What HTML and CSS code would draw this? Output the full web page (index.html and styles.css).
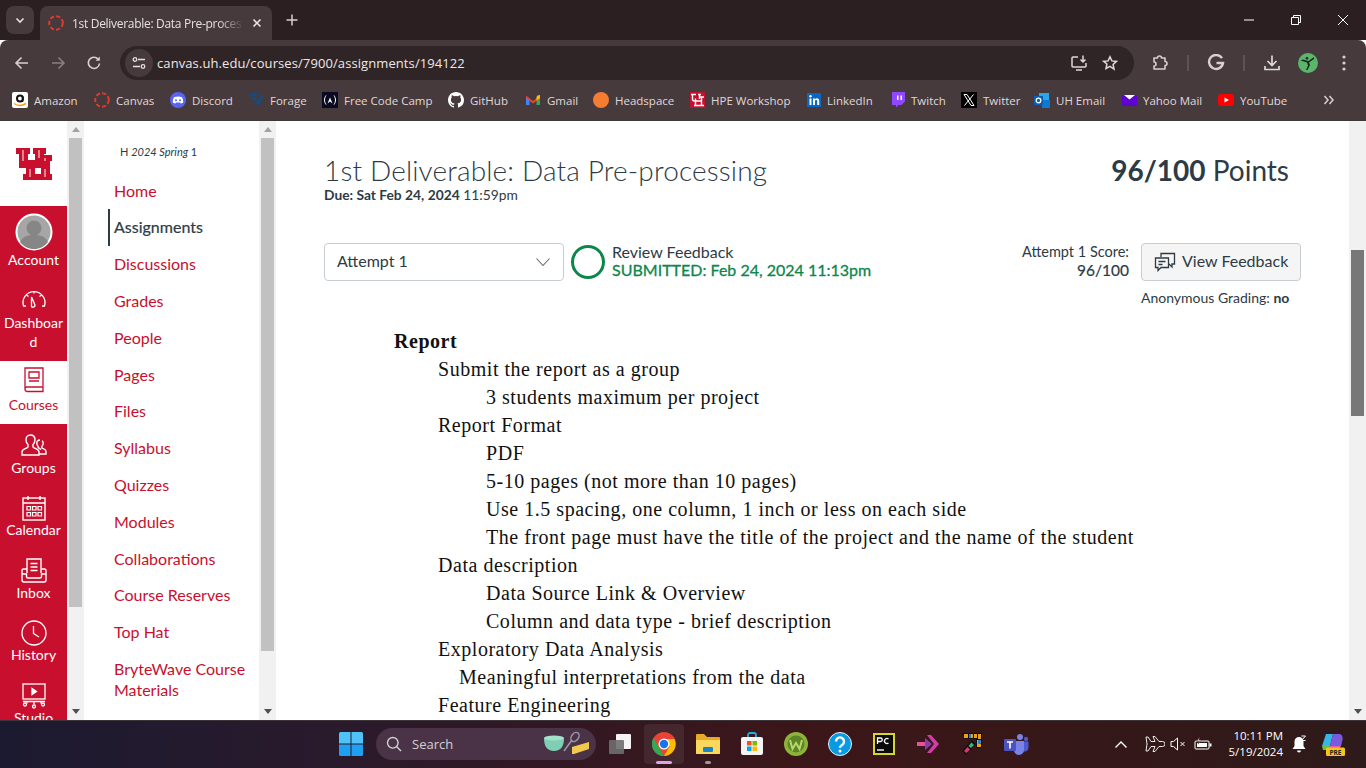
FILE: index.html
```html
<!DOCTYPE html>
<html lang="en">
<head>
    <meta charset="UTF-8">
    <meta name="viewport" content="width=device-width, initial-scale=1.0">
    <title>1st Deliverable: Data Pre-processing</title>
    <link rel="stylesheet" href="styles.css">
</head>
<body>
<div class="screen">

    <div class="tabstrip">
        <div class="tab-search"><svg width="12" height="12" viewBox="0 0 12 12"><path d="M2.500 4.500 6 8l3.500-3.500" fill="none" stroke="#e8e0e0" stroke-width="1.600"/></svg></div>
        <div class="tab">
            <svg width="16" height="16" viewBox="0 0 16 16"><circle cx="8" cy="8" r="6.800" fill="none" stroke="#e03a2c" stroke-width="2" stroke-dasharray="4.200 2.200"/></svg>
            <span class="tab-title">1st Deliverable: Data Pre-proces</span>
            <svg class="tab-close" width="10" height="10" viewBox="0 0 10 10"><path d="M1.500 1.500l7 7M8.500 1.500l-7 7" stroke="#e8e0e0" stroke-width="1.600"/></svg>
        </div>
        <svg class="new-tab" width="12" height="12" viewBox="0 0 12 12"><path d="M6 .5v11M.5 6h11" stroke="#d8cfcf" stroke-width="1.500"/></svg>
        <div class="win-controls">
            <svg width="12" height="12" viewBox="0 0 12 12"><path d="M1 6h10" stroke="#fff"/></svg>
            <svg width="12" height="12" viewBox="0 0 12 12"><path d="M1.500 3.500h7v7h-7zM3.500 3.500v-2h7v7h-2" fill="none" stroke="#fff"/></svg>
            <svg width="12" height="12" viewBox="0 0 12 12"><path d="M1 1l10 10M11 1 1 11" stroke="#fff"/></svg>
        </div>
    </div>

    <div class="toolbar">
        <div class="tool"><svg width="16" height="16" viewBox="0 0 16 16"><path d="M14 8H2.500M7.500 2.500 2 8l5.500 5.500" fill="none" stroke="#d8cfcf" stroke-width="1.600"/></svg></div>
        <div class="tool"><svg width="16" height="16" viewBox="0 0 16 16"><path d="M2 8h11.500M8.500 2.500 14 8l-5.500 5.500" fill="none" stroke="#8a7f80" stroke-width="1.600"/></svg></div>
        <div class="tool"><svg width="16" height="16" viewBox="0 0 16 16"><path d="M13.500 8.500A5.600 5.600 0 1 1 12 4" fill="none" stroke="#d8cfcf" stroke-width="1.600"/><path d="M13.800 1.500v4.300H9.500z" fill="#d8cfcf"/></svg></div>
        <div class="omnibox">
            <div class="site-chip"><svg width="14" height="14" viewBox="0 0 14 14" fill="none" stroke="#e8e0e0" stroke-width="1.300"><path d="M6 3.500h7M1 10.500h7"/><circle cx="3" cy="3.500" r="1.800"/><circle cx="11" cy="10.500" r="1.800"/></svg></div>
            <span class="url">canvas.uh.edu/courses/7900/assignments/194122</span>
            <svg class="omni-icon" width="18" height="18" viewBox="0 0 18 18" fill="none" stroke="#e0d8d8" stroke-width="1.500"><path d="M8 3H3a1 1 0 0 0-1 1v8a1 1 0 0 0 1 1h12a1 1 0 0 0 1-1V9M6 16h6M13 1.500V8M10.500 5.500 13 8l2.500-2.500"/></svg>
            <svg class="omni-icon" width="16" height="16" viewBox="0 0 16 16"><path d="M8 1.800l1.900 4.100 4.500.5-3.300 3.100.9 4.500L8 11.300l-4 2.200.9-4.500L1.600 6.400l4.500-.5z" fill="none" stroke="#e0d8d8" stroke-width="1.500"/></svg>
        </div>
        <div class="tool"><svg width="18" height="18" viewBox="0 0 18 18"><path d="M3 4h3.500a2 2 0 0 1 4 0H14v3.500a2 2 0 0 1 0 4V15H3v-3a2 2 0 0 0 0-4z" fill="none" stroke="#d8cfcf" stroke-width="1.600" stroke-linejoin="round"/></svg></div>
        <div class="tool-sep"></div>
        <div class="tool"><svg width="18" height="18" viewBox="0 0 18 18"><path d="M15 4.200A7 7 0 1 0 16 9H9.500" fill="none" stroke="#d8cfcf" stroke-width="2.400"/></svg></div>
        <div class="tool-sep"></div>
        <div class="tool"><svg width="18" height="18" viewBox="0 0 18 18"><path d="M9 1.500V11M4.500 7 9 11.500 13.500 7M2 12v3.500h14V12" fill="none" stroke="#e0d8d8" stroke-width="1.700"/></svg></div>
        <div class="tool"><svg width="20" height="20" viewBox="0 0 20 20"><circle cx="10" cy="10" r="10" fill="#5bb56b"/><path d="M16 4 10.500 8 5 6.500l-2.500 1L9 9.500l1 3L8 17h1.500l2.500-5-1-2.500 5-3.500z" fill="#1e2b22"/><circle cx="9" cy="5.300" r="1.300" fill="#1e2b22"/></svg></div>
        <div class="tool"><svg width="4" height="16" viewBox="0 0 4 16" fill="#d8cfcf"><circle cx="2" cy="2" r="1.600"/><circle cx="2" cy="8" r="1.600"/><circle cx="2" cy="14" r="1.600"/></svg></div>
    </div>

    <div class="bookmarks">
        <div class="mark mark-amazon"><svg width="16" height="16" viewBox="0 0 16 16"><rect width="16" height="16" rx="2" fill="#fff"/><circle cx="8" cy="6.500" r="3" fill="none" stroke="#111" stroke-width="2"/><path d="M10.500 4v6" stroke="#111" stroke-width="1.500"/><path d="M2 11.500c3.500 2.500 8 2.500 12 0" fill="none" stroke="#f90" stroke-width="1.500"/></svg>Amazon</div>
        <div class="mark mark-canvas"><svg width="16" height="16" viewBox="0 0 16 16"><circle cx="8" cy="8" r="6.800" fill="none" stroke="#e03a2c" stroke-width="2" stroke-dasharray="4.200 2.200"/></svg>Canvas</div>
        <div class="mark mark-discord"><svg width="16" height="16" viewBox="0 0 16 16"><circle cx="8" cy="8" r="8" fill="#5865f2"/><path d="M4 5.200c2.500-1 5.500-1 8 0 1 1.700 1.300 3.500 1.200 5.300-1 .7-1.800 1-2.500 1.100l-.6-1H6l-.6 1c-.8-.1-1.600-.4-2.600-1.100C2.700 8.700 3 6.900 4 5.200z" fill="#fff"/><circle cx="6" cy="8.200" r="1" fill="#5865f2"/><circle cx="10" cy="8.200" r="1" fill="#5865f2"/></svg>Discord</div>
        <div class="mark mark-forage"><svg width="16" height="16" viewBox="0 0 16 16" fill="#124e86"><path d="M0 3l8-3 1 3-5 2zM10 1l6 4-3 2zM4 6l4-1 1 3-3 1zM10 7l5 0-5 7-2-3z"/></svg>Forage</div>
        <div class="mark mark-fcc"><svg width="16" height="16" viewBox="0 0 16 16"><rect width="16" height="16" fill="#0a0a23"/><path d="M4 3.500C2 6.500 2 9.500 4 12.500M12 3.500c2 3 2 6 0 9" fill="none" stroke="#fff"/><path d="M5.500 11.500 8 5.500l2.500 6-2.500-2z" fill="#fff"/></svg>Free Code Camp</div>
        <div class="mark mark-github"><svg width="16" height="16" viewBox="0 0 16 16"><path fill="#fff" d="M8 0C3.580 0 0 3.580 0 8c0 3.540 2.290 6.530 5.470 7.590.4.070.55-.170.550-.380v-1.340c-2.230.480-2.700-1.070-2.700-1.070-.360-.920-.890-1.170-.890-1.170-.730-.500.060-.490.060-.490.800.060 1.230.830 1.230.830.710 1.220 1.870.870 2.330.660.070-.520.280-.870.510-1.070-1.780-.200-3.640-.890-3.640-3.950 0-.870.310-1.590.820-2.150-.080-.200-.360-1.020.080-2.120 0 0 .670-.210 2.200.820a7.600 7.600 0 0 1 4 0c1.530-1.040 2.200-.820 2.200-.820.440 1.100.160 1.920.080 2.120.510.560.820 1.270.820 2.150 0 3.070-1.870 3.750-3.650 3.950.290.250.540.730.540 1.480v2.190c0 .210.150.460.550.380A8 8 0 0 0 16 8c0-4.420-3.580-8-8-8z"/></svg>GitHub</div>
        <div class="mark mark-gmail"><svg width="16" height="16" viewBox="0 0 16 16"><path d="M1 13V4l3.500 2.700V13z" fill="#4285f4"/><path d="M11.500 13V6.700L15 4v9z" fill="#34a853"/><path d="M1 3.500 8 9l7-5.500V6L8 11.500 1 6z" fill="#ea4335"/><path d="M12.500 3.500 15 3v3l-3.500 2.700V5z" fill="#fbbc04"/></svg>Gmail</div>
        <div class="mark mark-headspace"><svg width="16" height="16" viewBox="0 0 16 16"><circle cx="8" cy="8" r="8" fill="#f47d31"/></svg>Headspace</div>
        <div class="mark mark-hpe"><svg width="15" height="16" viewBox="0 0 15 16"><rect width="15" height="16" fill="#c8102e"/><path d="M1 2.500h5M2.500 2.500v4.500a2 2 0 0 0 2 2h5M8 2.500h3M9.500 2.500V7M4 13.500h4M5.500 6.500v7M7 13.500h7M11.500 5v8.500M10 5h4M5.500 9h6" fill="none" stroke="#fff" stroke-width="1.400"/></svg>HPE Workshop</div>
        <div class="mark mark-linkedin"><svg width="14" height="14" viewBox="0 0 14 14"><rect width="14" height="14" fill="#0a66c2"/><path d="M2.500 5.500h2V12h-2zM6 5.500h1.900v1c.5-.8 1.200-1.200 2.100-1.200 1.500 0 2.200 1 2.200 2.700v4h-2V8.500c0-.9-.3-1.400-1-1.400s-1.200.5-1.200 1.400V12H6z" fill="#fff"/><circle cx="3.500" cy="3.300" r="1.200" fill="#fff"/></svg>LinkedIn</div>
        <div class="mark mark-twitch"><svg width="15" height="16" viewBox="0 0 15 16"><path d="M2 0h13v9.500L11.500 13H8.500L6 15.500V13H2z" fill="#9146ff"/><path d="M7 3.500h1.500v4.500H7zM10.500 3.500H12v4.500h-1.500z" fill="#fff"/></svg>Twitch</div>
        <div class="mark mark-twitter"><svg width="16" height="16" viewBox="0 0 16 16"><rect width="16" height="16" fill="#000"/><path d="M3 2.500h3l7 11h-3zM12.500 2.500 3.500 13.500" fill="none" stroke="#fff"/></svg>Twitter</div>
        <div class="mark mark-outlook"><svg width="16" height="16" viewBox="0 0 16 16"><path d="M5 1h10v12H5z" fill="#28a8ea"/><path d="M8 8h8v7a1 1 0 0 1-1 1H8z" fill="#0f78d4"/><rect y="4" width="9" height="9" fill="#0a5fb0"/><circle cx="4.500" cy="8.500" r="2.300" fill="none" stroke="#fff" stroke-width="1.300"/></svg>UH Email</div>
        <div class="mark mark-yahoo"><svg width="15" height="12" viewBox="0 0 15 12"><rect width="15" height="11" y="1" fill="#5f01d1"/><path d="M2 1h11L7.500 5.500z" fill="#fff"/></svg>Yahoo Mail</div>
        <div class="mark mark-youtube"><svg width="16" height="12" viewBox="0 0 16 12"><rect width="16" height="12" rx="3" fill="#f00"/><path d="M6.500 3.500 11 6 6.500 8.500z" fill="#fff"/></svg>YouTube</div>
        <svg class="mark-more" width="12" height="10" viewBox="0 0 12 10"><path d="M1.500 1 5 5 1.500 9M6.500 1 10 5 6.500 9" fill="none" stroke="#d8cfcf" stroke-width="1.500"/></svg>
    </div>

    <div class="page">
        <nav class="rail">
            <div class="rail-logo">
                <svg width="38" height="34" viewBox="0 0 38 34">
                    <g fill="#c8102e">
                        <rect x="1" y="1" width="14" height="6"/>
                        <rect x="18" y="1" width="13" height="6"/>
                        <rect x="4" y="1" width="9" height="20"/>
                        <rect x="20" y="1" width="9" height="20"/>
                        <rect x="23" y="8" width="14" height="6"/>
                        <rect x="26" y="8" width="9" height="25"/>
                        <rect x="11" y="13" width="9" height="20"/>
                        <rect x="4" y="14" width="31" height="7"/>
                        <rect x="8" y="27" width="15" height="6"/>
                        <rect x="23" y="27" width="14" height="6"/>
                    </g>
                    <path d="M8 3v11M24 3v8M15 22v8M30 11v3M30 22v8" fill="none" stroke="#f6ccd3" stroke-width="1.200"/>
                </svg>
            </div>
            <div class="rail-group">
                <div class="rail-item rail-account">
                    <svg width="38" height="38" viewBox="0 0 38 38"><circle cx="19" cy="19" r="17.500" fill="#a6a6a6" stroke="#fff" stroke-width="2"/><circle cx="19" cy="15" r="7.500" fill="#868686"/><path d="M5 29c3-6 8-7 14-7s11 1 14 7c-3.500 4.500-8.500 7-14 7s-10.500-2.500-14-7z" fill="#868686"/></svg>
                    <span>Account</span>
                </div>
                <div class="rail-item rail-dash">
                    <svg width="26" height="26" viewBox="0 0 26 26" fill="none" stroke="#fff" stroke-width="1.300"><path d="M5 20H2.500A11 11 0 1 1 23.500 20H21"/><path d="M10.500 11l3.500 8a2 2 0 0 1-3.500 1.500z"/><path d="M13 5v2.500M5.500 9l2 1.500M20.500 9l-2 1.500"/></svg>
                    <span>Dashboard</span>
                </div>
            </div>
            <div class="rail-item rail-active">
                <svg width="26" height="26" viewBox="0 0 26 26" fill="none" stroke="#c8102e" stroke-width="1.300"><path d="M4 1h18v19H6a2 2 0 0 0-2 2zM4 22a2.500 2.500 0 0 0 2.500 2.500H22V20"/><path d="M8 5h10v6H8zM8 14h10"/></svg>
                <span>Courses</span>
            </div>
            <div class="rail-item">
                <svg width="26" height="26" viewBox="0 0 26 26" fill="none" stroke="#fff" stroke-width="1.400"><path d="M9.500 2c-3 0-4.500 2.200-4.500 4.800 0 2.200 1 3.800 2 4.700v2.500C5 16 1 16 1 19v3h17v-3c0-3-4-3-6-5v-2.500c1-.9 2-2.500 2-4.700C14 4.200 12.500 2 9.500 2z"/><path d="M19 7c-2 0-3.200 1.500-3.200 3.300 0 1.500.7 2.600 1.400 3.200v1c1 1 2 1.300 3 2M21 7.700c.8.600 1.200 1.600 1.200 2.600 0 1.500-.7 2.600-1.400 3.200v1.500c1.500 1 4.200 1 4.200 3.500V21h-7"/></svg>
                <span>Groups</span>
            </div>
            <div class="rail-item">
                <svg width="26" height="26" viewBox="0 0 26 26" fill="none" stroke="#fff" stroke-width="1.400"><rect x="2" y="3" width="22" height="22"/><path d="M2 8h22M7 1v4M19 1v4"/><path d="M6 11.500h3.500V15H6zM11.500 11.500H15V15h-3.500zM17 11.500h3.500V15H17zM6 17.500h3.500V21H6zM11.500 17.500H15V21h-3.500zM17 17.500h3.500V21H17z" stroke-width="1.200"/></svg>
                <span>Calendar</span>
            </div>
            <div class="rail-item">
                <svg width="26" height="26" viewBox="0 0 26 26" fill="none" stroke="#fff" stroke-width="1.400"><path d="M6 15V1h14v14"/><path d="M9.500 5.500h7M9.500 9h7M9.500 12.500h7"/><path d="M6 11H2.500A1.500 1.500 0 0 0 1 12.500V22a2 2 0 0 0 2 2h20a2 2 0 0 0 2-2V12.500A1.500 1.500 0 0 0 23.500 11H20M1 16h4.500v2.500a1.500 1.500 0 0 0 1.500 1.500h12a1.500 1.500 0 0 0 1.500-1.500V16H25"/></svg>
                <span>Inbox</span>
            </div>
            <div class="rail-item">
                <svg width="26" height="26" viewBox="0 0 26 26" fill="none" stroke="#fff" stroke-width="1.300"><circle cx="13" cy="13" r="12"/><path d="M12.500 6v7.500L18 17"/></svg>
                <span>History</span>
            </div>
            <div class="rail-item">
                <svg width="26" height="26" viewBox="0 0 26 26" fill="none" stroke="#fff" stroke-width="1.300"><rect x="2" y="1" width="22" height="15"/><path d="M11 5.500v6l4.500-3z" fill="#fff"/><path d="M2 18.500h22M6 18.500v2M13 18.500v3M20 18.500v2"/><circle cx="4" cy="21.500" r="1.500"/><circle cx="13" cy="23.500" r="1.500"/><circle cx="22" cy="21.500" r="1.500"/></svg>
                <span>Studio</span>
            </div>
        </nav>
        <div class="scrollbar">
            <div class="sb-up"></div>
            <div class="sb-thumb sb-thumb-rail"></div>
            <div class="sb-down"></div>
        </div>

        <aside class="course-nav">
            <div class="course-name">H <em>2024 Spring</em> 1</div>
            <ul class="course-links">
                <li><a>Home</a></li>
                <li class="current"><a>Assignments</a></li>
                <li><a>Discussions</a></li>
                <li><a>Grades</a></li>
                <li><a>People</a></li>
                <li><a>Pages</a></li>
                <li><a>Files</a></li>
                <li><a>Syllabus</a></li>
                <li><a>Quizzes</a></li>
                <li><a>Modules</a></li>
                <li><a>Collaborations</a></li>
                <li><a>Course Reserves</a></li>
                <li><a>Top Hat</a></li>
                <li><a>BryteWave Course Materials</a></li>
            </ul>
        </aside>
        <div class="scrollbar">
            <div class="sb-up"></div>
            <div class="sb-thumb sb-thumb-nav"></div>
            <div class="sb-down"></div>
        </div>

        <main class="content">
            <div class="title-row">
                <div>
                    <h1>1st Deliverable: Data Pre-processing</h1>
                    <div class="due"><b>Due: Sat Feb 24, 2024</b> 11:59pm</div>
                </div>
                <div class="points"><b>96/100</b> Points</div>
            </div>

            <div class="attempt-row">
                <div class="attempt-select"><span>Attempt <b>1</b></span>
                    <svg width="16" height="10" viewBox="0 0 16 10"><path d="M1.500 1.500 8 8.500l6.500-7" fill="none" stroke="#5c6a74" stroke-width="1.100"/></svg>
                </div>
                <div class="status-ring"></div>
                <div class="status-text">
                    <div>Review Feedback</div>
                    <div class="submitted">SUBMITTED: Feb 24, 2024 11:13pm</div>
                </div>
                <div class="score">
                    <div>Attempt 1 Score:</div>
                    <div class="score-num">96/100</div>
                </div>
                <div class="feedback-btn">
                    <svg width="22" height="20" viewBox="0 0 22 20" fill="none" stroke="#2d3b45" stroke-width="1.300"><path d="M7 5V1.500h13.500V12H18v3l-3-3"/><path d="M1.500 6h13v9.500H7L4 18.500v-3H1.500zM4.500 9.500h7M4.500 12.500h4"/></svg>
                    <span>View Feedback</span>
                </div>
            </div>
            <div class="anon-row"><div class="anon">Anonymous Grading: <b>no</b></div></div>

            <div class="report">
                <div class="report-title">Report</div>
                <div class="lvl1">Submit the report as a group</div>
                <div class="lvl2">3 students maximum per project</div>
                <div class="lvl1">Report Format</div>
                <div class="lvl2">PDF</div>
                <div class="lvl2">5-10 pages (not more than 10 pages)</div>
                <div class="lvl2">Use 1.5 spacing, one column, 1 inch or less on each side</div>
                <div class="lvl2">The front page must have the title of the project and the name of the student</div>
                <div class="lvl1">Data description</div>
                <div class="lvl2">Data Source Link &amp; Overview</div>
                <div class="lvl2">Column and data type - brief description</div>
                <div class="lvl1">Exploratory Data Analysis</div>
                <div class="lvl1b">Meaningful interpretations from the data</div>
                <div class="lvl1">Feature Engineering</div>
            </div>
        </main>
        <div class="scrollbar">
            <div class="sb-up sb-spacer"></div>
            <div class="sb-thumb sb-thumb-main"></div>
            <div class="sb-down"></div>
        </div>
    </div>

    <footer class="taskbar">
        <svg class="tb-start" width="24" height="24" viewBox="0 0 24 24"><path d="M0 1.500A1.500 1.500 0 0 1 1.500 0h10v11.500H0z" fill="#4fc3f7"/><path d="M12.500 0h10A1.500 1.500 0 0 1 24 1.500v10H12.500z" fill="#4fc3f7"/><path d="M0 12.500h11.500V24h-10A1.500 1.500 0 0 1 0 22.500z" fill="#1e9fef"/><path d="M12.500 12.500H24v10a1.500 1.500 0 0 1-1.500 1.500h-10z" fill="#1e9fef"/></svg>
        <div class="tb-search">
            <svg width="16" height="16" viewBox="0 0 16 16" fill="none" stroke="#d5d0d5" stroke-width="1.400"><circle cx="6.800" cy="6.800" r="5.300"/><path d="m10.800 10.800 4.200 4.200"/></svg>
            <span>Search</span>
            <svg class="tb-search-art" width="50" height="26" viewBox="0 0 50 26"><path d="M1 7h20c0 8-3 13-10 13S1 15 1 7z" fill="#7fcfb4"/><ellipse cx="11" cy="7" rx="10" ry="2.500" fill="#a4e2cc"/><path d="M21 20 29 9" stroke="#9a97a8" stroke-width="1.500"/><ellipse cx="32" cy="6" rx="3.500" ry="5" fill="none" stroke="#9a97a8" stroke-width="1.500" transform="rotate(35 32 6)"/><path d="M29 16l17-5v7l-15 5h-2z" fill="#f2c94c"/></svg>
        </div>
        <div class="tb-app"><svg width="24" height="22" viewBox="0 0 24 22"><rect x="8" y="1" width="15" height="15" rx="1" fill="#f4f4f4"/><rect x="1" y="7" width="15" height="14" rx="1" fill="#6e6e6e" fill-opacity=".9"/></svg></div>
        <div class="tb-app tb-active"><svg width="24" height="24" viewBox="0 0 24 24"><circle cx="12" cy="12" r="12" fill="#ea4335"/><path d="M12 24A12 12 0 0 1 1.600 6L7 15.500 12 24z" fill="#34a853"/><path d="M12 24l5.500-9.500L12 7h10.400A12 12 0 0 1 12 24z" fill="#fbbc04"/><circle cx="12" cy="12" r="5.500" fill="#fff"/><circle cx="12" cy="12" r="4.200" fill="#1a73e8"/></svg></div>
        <div class="tb-app tb-open"><svg width="24" height="22" viewBox="0 0 24 22"><path d="M0 2a1 1 0 0 1 1-1h7l3 3h12a1 1 0 0 1 1 1v15a1 1 0 0 1-1 1H1a1 1 0 0 1-1-1z" fill="#e8a92a"/><path d="M0 7h24v13a1 1 0 0 1-1 1H1a1 1 0 0 1-1-1z" fill="#fbd75b"/><rect x="7" y="14" width="10" height="5" rx="1" fill="#1b84c8"/></svg></div>
        <div class="tb-app"><svg width="24" height="24" viewBox="0 0 24 24"><path d="M8 6V3a2 2 0 0 1 2-2h4a2 2 0 0 1 2 2v3" fill="none" stroke="#29a8e8" stroke-width="1.800"/><rect x="1" y="5" width="22" height="18" rx="2" fill="#f4f4f4"/><rect x="7" y="9" width="4.500" height="4.500" fill="#f25022"/><rect x="12.500" y="9" width="4.500" height="4.500" fill="#7fba00"/><rect x="7" y="14.500" width="4.500" height="4.500" fill="#00a4ef"/><rect x="12.500" y="14.500" width="4.500" height="4.500" fill="#ffb900"/></svg></div>
        <div class="tb-app"><svg width="24" height="24" viewBox="0 0 24 24"><circle cx="12" cy="12" r="12" fill="#8cb33a"/><circle cx="12" cy="12" r="8.500" fill="#5d8426"/><path d="M6 8l2.500 9L12 11l3.500 6L18 8" fill="none" stroke="#b7d96a" stroke-width="2"/></svg></div>
        <div class="tb-app"><svg width="24" height="24" viewBox="0 0 24 24"><circle cx="12" cy="12" r="11.500" fill="#0a9ae2" stroke="#eef" stroke-width="1"/><path d="M8 9.500a4 4 0 1 1 6.300 3.200c-1.500 1-2.300 1.700-2.300 3" fill="none" stroke="#fff" stroke-width="2.400"/><circle cx="12" cy="19" r="1.500" fill="#fff"/></svg></div>
        <div class="tb-app"><svg width="22" height="22" viewBox="0 0 22 22"><rect x="1" y="1" width="20" height="20" fill="#0b0b0b" stroke="#d6d62c" stroke-width="2"/><path d="M4 17h7" stroke="#fff" stroke-width="1.400"/><path d="M4.500 11V5h3a1.700 1.700 0 0 1 0 3.500h-3M15.500 6a2.500 2.500 0 1 0 0 4" fill="none" stroke="#fff" stroke-width="1.300"/></svg></div>
        <div class="tb-app"><svg width="24" height="20" viewBox="0 0 24 20"><path d="M1 8h12v4H1z" fill="#e0559a"/><path d="M11 1h4l8 9-8 9h-4l7-9z" fill="#cf3fa5"/><path d="M9 4l7 6-7 6z" fill="#8b3aa8"/></svg></div>
        <div class="tb-app"><svg width="22" height="24" viewBox="0 0 22 24"><path d="M1 1h20v15h-6V7H4z" fill="#111"/><path d="M3 2h4v4H3zM8 2h4v4H8zM13 2h3v4h-3zM17 2h3v5h-3zM16 8h4v7h-4z" fill="#e8a020"/><path d="M8 2h2v4H8zM17 8h3v4h-3z" fill="#2f80c9"/><path d="M1 19 11 8l4 4L5 23z" fill="#111"/><path d="M3 19l3.500-4 2.500 2.500L5.500 21z" fill="#d63b6f"/><path d="M7.500 14l3-3.500 2.500 2.500-3 3z" fill="#3eb372"/></svg></div>
        <div class="tb-app"><svg width="26" height="22" viewBox="0 0 26 22"><circle cx="17" cy="4" r="3" fill="#7b83eb"/><circle cx="23" cy="6" r="2.200" fill="#5059c9"/><path d="M19 8.500h6.500v6a4 4 0 0 1-6 3.500z" fill="#5059c9"/><path d="M9 8h12v9a5 5 0 0 1-10 0z" fill="#7b83eb"/><rect x="1" y="6" width="12" height="12" rx="1" fill="#4b53bc"/><path d="M4 9h6M7 9v6.500" stroke="#fff" stroke-width="1.600"/></svg></div>

        <div class="tray">
            <svg class="tray-caret" width="14" height="9" viewBox="0 0 14 9"><path d="M1.500 7.500 7 2l5.500 5.500" fill="none" stroke="#fff" stroke-width="1.400"/></svg>
            <svg class="tray-plane" width="20" height="16" viewBox="0 0 20 16"><path d="M1 1h2l3 4.500h4L8 .5h2l4 5h3.500a2.500 2.500 0 0 1 0 5H14l-4 5H8l2-5H6L3 15H1l1-7z" fill="none" stroke="#fff" stroke-width=".9"/></svg>
            <svg class="tray-sound" width="16" height="14" viewBox="0 0 16 14"><path d="M1 4.500h2.500L7.500 1v12L3.500 9.500H1zM10.500 5l4 4M14.500 5l-4 4" fill="none" stroke="#fff"/></svg>
            <svg class="tray-batt" width="18" height="14" viewBox="0 0 18 14"><rect x="1" y="4" width="14" height="8" rx="1" fill="none" stroke="#fff"/><rect x="3" y="6" width="10" height="4" fill="#fff"/><path d="M15.500 6.500h2v3h-2z" fill="#fff"/><path d="M5.500 0 3 4h2.500L4 7l3.500-4H5z" fill="#fff" stroke="#3a1a18" stroke-width=".5"/></svg>
            <div class="tray-clock"><div>10:11 PM</div><div>5/19/2024</div></div>
            <svg class="tray-bell" width="16" height="18" viewBox="0 0 16 18"><path d="M8 2a4.500 4.500 0 0 0-4.500 4.500V11L1.500 14h13L12.500 11V6.500A4.500 4.500 0 0 0 8 2z" fill="#fff"/><path d="M6 15.500h4a2 2 0 0 1-4 0z" fill="#fff"/><path d="M10.500 1h4l-4 4.500h4" fill="none" stroke="#fff" stroke-width="1"/></svg>
            <svg class="tray-copilot" width="24" height="24" viewBox="0 0 24 24"><path d="M5 2h7L9 14H1z" fill="#35b6e8"/><path d="M12 2h6c3 0 4 3 3.500 6L20 14H9z" fill="#7a5be0"/><path d="M9 14h11l-3 4H5z" fill="#e65fa4"/><path d="M1 14h8l-2 4H2z" fill="#6cc04a"/><rect x="5" y="15.500" width="19" height="8.500" rx="1.500" fill="#f5c518"/><text x="14.500" y="22.500" class="pre-tag">PRE</text></svg>
        </div>
    </footer>
</div>
</body>
</html>
```

FILE: styles.css
```css
* { box-sizing: border-box; }
html, body { margin: 0; height: 100%; overflow: hidden; }
body { font-family: Lato, Arial, sans-serif; color: #2d3b45; background: #fff; }
.screen { width: 1366px; height: 768px; display: flex; flex-direction: column; overflow: hidden; }

/* browser chrome */
.tabstrip { height: 40px; flex: none; background: #2b1f21; display: flex; align-items: flex-end; padding-left: 6px; }
.tab-search { width: 28px; height: 28px; margin-bottom: 6px; background: #463a3c; border-radius: 8px; display: flex; align-items: center; justify-content: center; }
.tab { width: 232px; height: 34px; margin-left: 6px; background: #463a3c; border-radius: 8px 8px 0 0; display: flex; align-items: center; padding: 0 10px 0 8px; color: #e8e0e0; }
.tab-title { margin-left: 8px; flex: 1; font: 12px "Open Sans", sans-serif; white-space: nowrap; overflow: hidden; letter-spacing: -0.3px; -webkit-mask-image: linear-gradient(90deg, #000 85%, transparent); mask-image: linear-gradient(90deg, #000 85%, transparent); }
.tab-close { margin-left: 8px; flex: none; }
.new-tab { margin: 0 0 14px 14px; }
.win-controls { margin-left: auto; margin-bottom: 14px; display: flex; gap: 35px; padding-right: 17px; }

.toolbar { height: 40px; flex: none; background: #463a3c; border-radius: 8px 8px 0 0; display: flex; align-items: flex-end; padding-left: 4px; }
.tool { width: 36px; height: 34px; flex: none; display: flex; align-items: center; justify-content: center; }
.tool-sep { width: 20px; height: 34px; flex: none; display: flex; justify-content: center; align-items: center; }
.tool-sep::before { content: ""; width: 2px; height: 16px; background: #5e5254; }
.omnibox { width: 1014px; height: 34px; margin: 0 8px; flex: none; background: #2f2426; border-radius: 17px; display: flex; align-items: center; padding: 0 16px 0 5px; }
.site-chip { width: 28px; height: 28px; border-radius: 50%; background: #463a3c; display: flex; align-items: center; justify-content: center; flex: none; }
.url { margin-left: 4px; flex: 1; font: 13px "Open Sans", sans-serif; color: #f0e8e8; letter-spacing: 0.09px; }
.omni-icon { margin-left: 14px; flex: none; }

.bookmarks { height: 41px; flex: none; background: #463a3c; border-bottom: 1px solid #3a3a3a; display: flex; align-items: center; font: 11.5px "Open Sans", sans-serif; color: #e0d8d8; }
.mark { display: flex; align-items: center; gap: 6px; white-space: nowrap; flex: none; }
.mark-amazon { margin-left: 12px; width: 82px; }
.mark-canvas { width: 76px; }
.mark-discord { width: 78px; }
.mark-forage { width: 74px; }
.mark-fcc { width: 126px; }
.mark-github { width: 77px; }
.mark-gmail { width: 68px; }
.mark-headspace { width: 97px; }
.mark-hpe { width: 117px; }
.mark-linkedin { width: 83px; }
.mark-twitch { width: 71px; }
.mark-twitter { width: 73px; }
.mark-outlook { width: 88px; }
.mark-yahoo { width: 96px; }
.mark-youtube { width: 100px; }
.mark-more { margin-left: 5px; }

/* canvas page */
.page { flex: 1; min-height: 0; display: flex; background: #fff; overflow: hidden; }
.rail { width: 67px; flex: none; overflow: hidden; font-size: 14px; color: #fff; line-height: 19px; text-align: center; }
.rail-logo { height: 85px; display: flex; justify-content: center; padding-top: 26px; }
.rail-group { background: #c8102e; }
.rail-item { height: 62.5px; background: #c8102e; padding: 9px 3px 0; overflow-wrap: anywhere; }
.rail-item svg { display: block; margin: 0 auto -1px; }
.rail-item.rail-account { height: 72.5px; padding-top: 7px; }
.rail-item.rail-dash { height: 82.5px; padding-top: 7px; }
.rail-item.rail-dash svg { margin-bottom: 1px; }
.rail-item.rail-active { background: #fff; color: #c8102e; padding-top: 6px; }
.rail-item.rail-active svg { margin-bottom: 2px; }

.scrollbar { width: 17px; flex: none; background: #f1f1f1; display: flex; flex-direction: column; }
.sb-up, .sb-down { height: 17px; flex: none; position: relative; }
.sb-up::after { content: ""; position: absolute; left: 5px; top: 6px; border: 4px solid transparent; border-top: 0; border-bottom: 5px solid #a3a3a3; }
.sb-down::after { content: ""; position: absolute; left: 5px; top: 6px; border: 4px solid transparent; border-bottom: 0; border-top: 5px solid #505050; }
.sb-down { margin-top: auto; }
.sb-thumb { width: 13px; margin-left: 2px; background: #c1c1c1; }
.sb-thumb-rail { height: 469px; }
.sb-thumb-nav { height: 513px; }
.sb-up.sb-spacer { height: 129px; }
.sb-spacer::after { display: none; }
.sb-thumb-main { height: 166px; background: #787878; }

.course-nav { width: 175px; flex: none; padding-left: 24px; overflow: hidden; }
.course-name { font-size: 11px; padding: 24px 0 0 12px; line-height: 14px; height: 49px; }
.course-links { list-style: none; margin: 0; padding: 2.6px 0 0; }
.course-links li { padding: 8px 4px; font-size: 16px; line-height: 20.8px; color: #c8102e; border-left: 2px solid transparent; }
.course-links li.current { color: #2d3b45; border-left-color: #2d3b45; -webkit-text-stroke: 0.2px #2d3b45; }

.content { flex: 1; min-width: 0; overflow: hidden; padding: 0 48px; }
.title-row { display: flex; justify-content: space-between; }
h1 { margin: 32px 0 0; font-size: 28px; font-weight: 300; line-height: 34px; letter-spacing: 0.15px; }
.due { font-size: 13.8px; line-height: 15px; }
.points { margin: 32px 12px 0 0; font-size: 28px; line-height: 34px; }
.attempt-row { display: flex; align-items: center; margin-top: 41px; height: 38px; }
.attempt-select { width: 240px; height: 38px; border: 1px solid #c7cdd1; border-radius: 4px; display: flex; align-items: center; padding: 0 12px; font-size: 16px; }
.attempt-select span { padding-bottom: 4px; }
.attempt-select svg { margin-left: auto; }
.attempt-select b { font-weight: 400; }
.status-ring { width: 34px; height: 34px; margin-left: 7px; border: 3px solid #0b874b; border-radius: 50%; flex: none; }
.status-text { margin-left: 7px; padding-bottom: 3px; font-size: 16px; line-height: 18px; }
.submitted { color: #0b874b; -webkit-text-stroke: 0.3px #0b874b; }
.score { margin-left: auto; padding-bottom: 2px; text-align: right; font-size: 14.5px; line-height: 18px; }
.score-num { font-size: 15.5px; -webkit-text-stroke: 0.2px #2d3b45; }
.feedback-btn { width: 160px; height: 38px; margin-left: 12px; background: #f5f5f5; border: 1px solid #c7cdd1; border-radius: 4px; display: flex; align-items: center; gap: 6px; padding-left: 12px; font-size: 16px; }
.feedback-btn span { padding-bottom: 4px; }
.anon-row { display: flex; justify-content: flex-end; }
.anon { width: 160px; font-size: 14px; line-height: 18px; margin-top: 8px; white-space: nowrap; }
.report { margin-top: 20px; font-family: "Liberation Serif", serif; font-size: 20px; line-height: 28px; color: #111; letter-spacing: 0.53px; }
.report-title { padding-left: 70px; font-weight: 700; }
.lvl1 { padding-left: 114px; }
.lvl1b { padding-left: 135px; }
.lvl2 { padding-left: 162px; }

/* windows taskbar */
.taskbar { height: 48px; flex: none; box-shadow: inset 0 1px 0 #3c3438; background: linear-gradient(90deg, #1c1a30 0%, #2a1a2c 25%, #3c1618 60%, #2e1a1a 100%); display: flex; align-items: center; padding-left: 339px; color: #fff; font-family: "Open Sans", sans-serif; }
.tb-start { flex: none; }
.tb-search { width: 220px; height: 32px; margin: 0 2px 0 13px; background: #4a3346; border-radius: 16px; display: flex; align-items: center; padding-left: 10px; font-size: 13px; color: #d5d0d5; flex: none; }
.tb-search span { margin-left: 10px; }
.tb-search-art { margin-left: auto; margin-right: 3px; }
.tb-app { width: 44px; height: 40px; flex: none; display: flex; align-items: center; justify-content: center; position: relative; }
.tb-active { background: rgba(255, 255, 255, 0.07); border-radius: 4px; width: 40px; margin: 0 2px; }
.tb-active::after { content: ""; position: absolute; left: 12px; bottom: 0; width: 16px; height: 3px; border-radius: 2px; background: #dba4e8; }
.tb-open::after { content: ""; position: absolute; left: 19px; bottom: 0; width: 6px; height: 3px; border-radius: 2px; background: #9a9a9a; }
.tray { margin-left: auto; display: flex; align-items: center; padding-right: 21px; }
.tray-plane { margin-left: 17px; }
.tray-sound { margin-left: 5px; }
.tray-batt { margin-left: 8px; }
.tray-clock { margin-left: 5px; width: 66px; text-align: right; font-size: 11.5px; line-height: 16px; }
.tray-bell { margin-left: 8px; }
.tray-copilot { margin-left: 14px; }
.pre-tag { font: 700 6.5px "Open Sans", sans-serif; fill: #222; text-anchor: middle; }
```
